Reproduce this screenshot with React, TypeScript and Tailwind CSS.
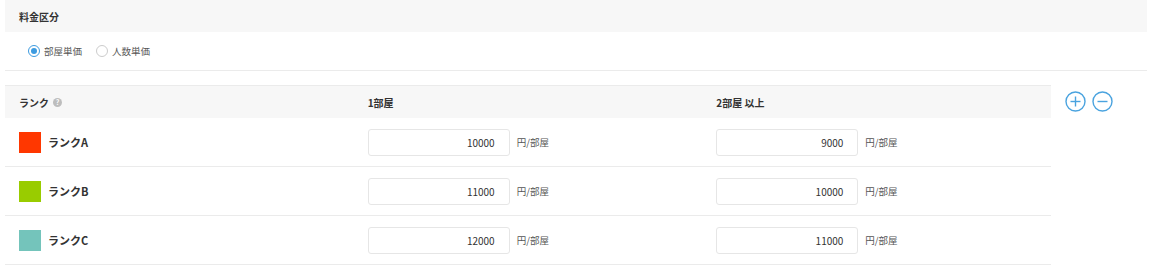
import React from "react";

const font = { fontFamily: '"Noto Sans CJK JP", "Noto Sans", sans-serif' };

const rows = [
  { name: "ランクA", color: "bg-[#ff3700]", a: "10000", b: "9000" },
  { name: "ランクB", color: "bg-[#99cc00]", a: "11000", b: "10000" },
  { name: "ランクC", color: "bg-[#74c4bb]", a: "12000", b: "11000" },
];

function PriceInput({ value }: { value: string }) {
  return (
    <div className="flex items-center">
      <div className="w-[142px] h-[27px] border border-[#e6e6e6] rounded-[3px] bg-white flex items-center justify-end pr-[14px] text-[10px] text-[#333]">
        {value}
      </div>
      <span className="ml-[7px] text-[9.5px] text-[#555]">円/部屋</span>
    </div>
  );
}

function CircleIcon({ plus }: { plus?: boolean }) {
  return (
    <svg width="21" height="21" viewBox="0 0 21 21" fill="none">
      <circle cx="10.5" cy="10.5" r="9.5" stroke="#4aa3df" strokeWidth="1.4" />
      <line x1="5.5" y1="10.5" x2="15.5" y2="10.5" stroke="#4aa3df" strokeWidth="1.4" />
      {plus && <line x1="10.5" y1="5.5" x2="10.5" y2="15.5" stroke="#4aa3df" strokeWidth="1.4" />}
    </svg>
  );
}

export default function App() {
  return (
    <div className="w-[1159px] h-[276px] bg-white" style={font}>
      <div className="ml-[5px] w-[1142px]">
        <div className="h-[32px] bg-[#f7f7f7] flex items-center px-[14px] text-[10px] font-bold text-[#333]">
          料金区分
        </div>
        <div className="h-[39px] border-b border-[#ebebeb] flex items-center pl-[23px] text-[9.5px] text-[#555]">
          <label className="flex items-center">
            <span className="w-[12px] h-[12px] rounded-full border border-[#3d9be0] flex items-center justify-center">
              <span className="w-[6px] h-[6px] rounded-full bg-[#3d9be0]" />
            </span>
            <span className="ml-[4px]">部屋単価</span>
          </label>
          <label className="flex items-center ml-[14px]">
            <span className="w-[12px] h-[12px] rounded-full border border-[#cccccc] bg-white" />
            <span className="ml-[4px]">人数単価</span>
          </label>
        </div>
      </div>
      <div className="ml-[5px] mt-[14px] flex items-start">
        <div className="w-[1046px] border-t border-[#ebebeb]">
          <div className="h-[32px] bg-[#f7f7f7] grid grid-cols-3 items-center text-[10px] font-bold text-[#333]">
            <div className="pl-[14px] flex items-center">
              ランク
              <span className="ml-[4px] w-[9px] h-[9px] rounded-full bg-[#bdbdbd] text-white text-[7px] leading-none flex items-center justify-center">
                ?
              </span>
            </div>
            <div className="pl-[14px]">1部屋</div>
            <div className="pl-[14px]">2部屋 以上</div>
          </div>
          {rows.map((r) => (
            <div key={r.name} className="h-[49px] border-b border-[#ebebeb] grid grid-cols-3 items-center">
              <div className="pl-[14px] flex items-center">
                <span className={`w-[22px] h-[21px] ${r.color}`} />
                <span className="ml-[7px] text-[11px] font-bold text-[#333]">{r.name}</span>
              </div>
              <div className="pl-[14px]">
                <PriceInput value={r.a} />
              </div>
              <div className="pl-[14px]">
                <PriceInput value={r.b} />
              </div>
            </div>
          ))}
        </div>
        <div className="ml-[14px] mt-[6px] flex items-center gap-[6px]">
          <CircleIcon plus />
          <CircleIcon />
        </div>
      </div>
    </div>
  );
}
